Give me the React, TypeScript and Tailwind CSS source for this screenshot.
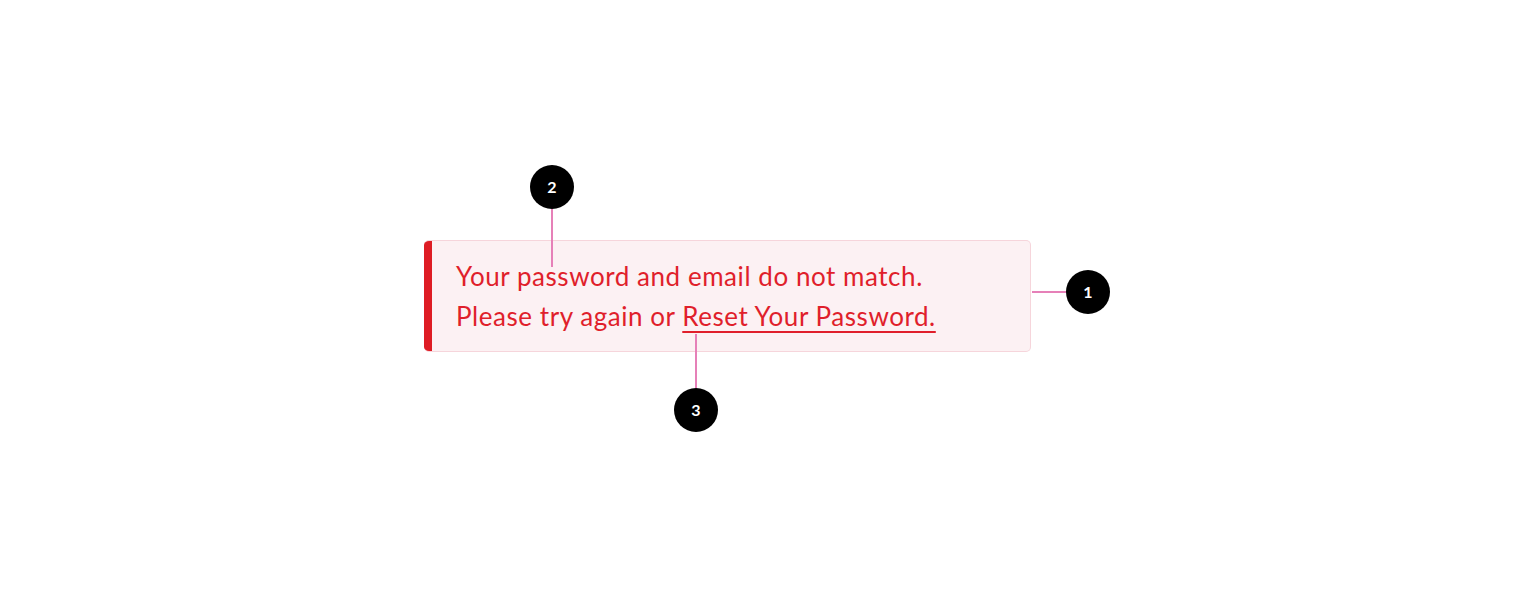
import React from 'react';

function Dot({ n }: { n: number }) {
  return (
    <div className="flex h-11 w-11 shrink-0 items-center justify-center rounded-full bg-black text-[16px] font-bold text-white">
      {n}
    </div>
  );
}

export default function App() {
  return (
    <div className="min-h-[596px] w-full bg-white font-['Lato',sans-serif]">
      <div className="pl-[424px] pt-[240px]">
        <div className="relative w-[607px]">
          <div className="flex overflow-hidden rounded-[5px] border border-l-0 border-[#f6d5db] bg-[#fcf1f3]">
            <div className="w-2 shrink-0 bg-[#de1c24]" />
            <p className="py-[15px] pl-6 text-[26px] leading-[40px] tracking-[0.55px] text-[#e01f2b]">
              Your password and email do not match.
              <br />
              Please try again or{' '}
              <a className="underline decoration-2 underline-offset-[5px]" href="#">
                Reset Your Password.
              </a>
            </p>
          </div>

          {/* callout 1 */}
          <div className="absolute left-[608px] top-[30px] flex items-center">
            <div className="h-[2px] w-[34px] bg-[#e680b8]" />
            <Dot n={1} />
          </div>

          {/* callout 2 */}
          <div className="absolute left-[106px] top-[-75px] flex flex-col items-center">
            <Dot n={2} />
            <div className="h-[58px] w-[2px] bg-[#e680b8]" />
          </div>

          {/* callout 3 */}
          <div className="absolute left-[250px] top-[94px] flex flex-col items-center">
            <div className="h-[54px] w-[2px] bg-[#e680b8]" />
            <Dot n={3} />
          </div>
        </div>
      </div>
    </div>
  );
}
